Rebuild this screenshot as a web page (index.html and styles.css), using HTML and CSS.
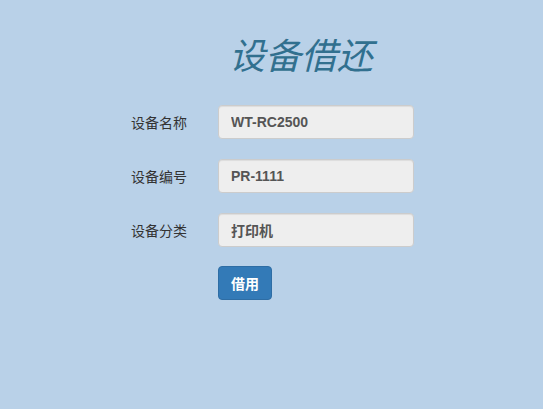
FILE: index.html
```html
<!DOCTYPE html>
<html lang="zh">
<head>
<meta charset="utf-8">
<link rel="stylesheet" href="styles.css">
</head>
<body>
<div class="page">
  <h1 class="title">设备借还</h1>
  <form class="form">
    <label class="label">设备名称</label>
    <input class="field" type="text" value="WT-RC2500" readonly>
    <label class="label">设备编号</label>
    <input class="field" type="text" value="PR-1111" readonly>
    <label class="label">设备分类</label>
    <input class="field" type="text" value="打印机" readonly>
    <span></span>
    <div class="actions"><button class="btn" type="button">借用</button></div>
  </form>
</div>
</body>
</html>
```

FILE: styles.css
```css
html, body {
  margin: 0;
  padding: 0;
  height: 100%;
  background: #b9d1e8;
}
body {
  font-family: "Liberation Sans", "Noto Sans CJK SC", sans-serif;
  font-size: 14px;
  color: #333;
}
.page {
  padding-top: 33px;
  padding-left: 131px;
}
.title {
  margin: 0 0 32px 98px;
  font-size: 36px;
  line-height: 40px;
  font-weight: 400;
  font-style: italic;
  color: #31708f;
  font-family: "Noto Sans CJK SC", sans-serif;
}
.form {
  display: grid;
  grid-template-columns: 56px 196px;
  column-gap: 31px;
  row-gap: 20px;
  align-items: center;
}
.label {
  font-family: "Noto Sans CJK SC", sans-serif;
  font-size: 14px;
  color: #333;
  white-space: nowrap;
}
.field {
  box-sizing: border-box;
  width: 196px;
  height: 34px;
  padding: 6px 12px;
  border: 1px solid #ccc;
  border-radius: 4px;
  background: #eee;
  color: #555;
  font-family: "Liberation Sans", "Noto Sans CJK SC", sans-serif;
  font-size: 14px;
  font-weight: bold;
  box-shadow: inset 0 1px 1px rgba(0,0,0,0.075);
  outline: none;
}
.actions {
  margin-top: -1px;
}
.btn {
  box-sizing: border-box;
  height: 34px;
  padding: 6px 12px;
  border: 1px solid #2e6da4;
  border-radius: 4px;
  background: #337ab7;
  color: #fff;
  font-family: "Noto Sans CJK SC", sans-serif;
  font-size: 14px;
  font-weight: bold;
  line-height: 20px;
}
```
